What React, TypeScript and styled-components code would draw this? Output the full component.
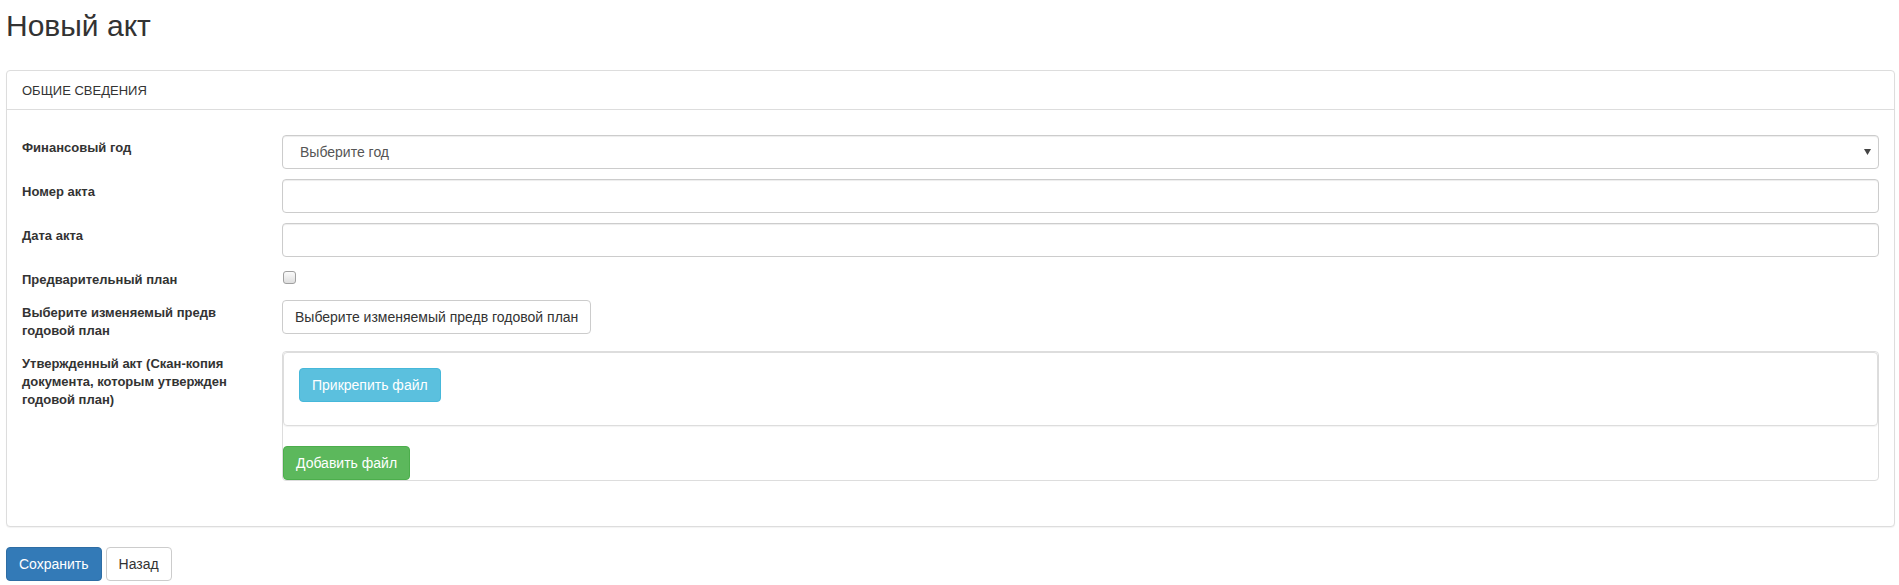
import React from "react";
import styled, { createGlobalStyle, css } from "styled-components";

const GlobalStyle = createGlobalStyle`
  html, body {
    margin: 0;
    padding: 0;
    background: #fff;
  }
  body {
    font-family: "Liberation Sans", Arial, Helvetica, sans-serif;
    color: #333;
    font-size: 14px;
    line-height: 1.42857;
  }
  *, *::before, *::after {
    box-sizing: border-box;
  }
`;

const Page = styled.div`
  padding: 9px 4px 0 6px;
`;

const Title = styled.h2`
  margin: 0 0 28px;
  font-size: 30px;
  font-weight: 500;
  line-height: 33px;
  color: #333;
`;

const Panel = styled.section`
  border: 1px solid #ddd;
  border-radius: 4px;
  margin-bottom: 20px;
  box-shadow: 0 1px 1px rgba(0, 0, 0, 0.05);
  background: #fff;
`;

const PanelHeading = styled.div`
  padding: 11px 15px 10px;
  font-size: 13px;
  line-height: 17px;
  border-bottom: 1px solid #ddd;
  color: #333;
`;

const PanelBody = styled.div`
  padding: 25px 15px 45px;
  display: flex;
  flex-direction: column;
  gap: 10px;
`;

const FormRow = styled.div`
  display: grid;
  grid-template-columns: 260px 1fr;
  align-items: start;
`;

const FieldLabel = styled.label`
  font-size: 13px;
  font-weight: bold;
  line-height: 18px;
  padding: 4px 15px 1px 0;
  color: #333;
`;

const controlBase = css`
  display: block;
  width: 100%;
  height: 34px;
  border: 1px solid #ccc;
  border-radius: 4px;
  background: #fff;
  box-shadow: inset 0 1px 1px rgba(0, 0, 0, 0.075);
  font-family: inherit;
  font-size: 14px;
  color: #555;
`;

const TextInput = styled.input`
  ${controlBase};
  padding: 6px 12px;
  line-height: 20px;
  outline: none;
`;

const SelectWrap = styled.div`
  position: relative;
`;

const SelectBox = styled.select`
  ${controlBase};
  appearance: none;
  -webkit-appearance: none;
  padding: 6px 30px 6px 17px;
  line-height: 20px;
  outline: none;
`;

const SelectArrow = styled.svg`
  position: absolute;
  right: 8px;
  top: 14px;
  width: 7px;
  height: 6px;
  pointer-events: none;
`;

const CheckCell = styled.div`
  min-height: 23px;
`;

const CheckBox = styled.input`
  appearance: none;
  -webkit-appearance: none;
  display: block;
  width: 13px;
  height: 13px;
  margin: 4px 0 0 1px;
  border: 1px solid #a0a0a0;
  border-radius: 3px;
  background: linear-gradient(#fbfbfb, #dedede);
`;

type Variant = "default" | "primary" | "info" | "success";

const variants: Record<Variant, ReturnType<typeof css>> = {
  default: css`
    color: #333;
    background: #fff;
    border-color: #ccc;
  `,
  primary: css`
    color: #fff;
    background: #337ab7;
    border-color: #2e6da4;
  `,
  info: css`
    color: #fff;
    background: #5bc0de;
    border-color: #46b8da;
  `,
  success: css`
    color: #fff;
    background: #5cb85c;
    border-color: #4cae4c;
  `,
};

const Button = styled.button<{ $variant: Variant }>`
  display: inline-block;
  padding: 6px 12px;
  font-family: inherit;
  font-size: 14px;
  line-height: 20px;
  font-weight: normal;
  border: 1px solid;
  border-radius: 4px;
  cursor: pointer;
  white-space: nowrap;
  ${(p) => variants[p.$variant]};
`;

const ControlStart = styled.div`
  display: flex;
  align-items: flex-start;
`;

const FileGroup = styled.div`
  border: 1px solid #ddd;
  border-radius: 4px;
  display: flex;
  flex-direction: column;
  align-items: flex-start;
`;

const FileList = styled.div`
  align-self: stretch;
  border: 1px solid #ddd;
  border-radius: 4px;
  padding: 15px 15px 23px;
  box-shadow: 0 1px 1px rgba(0, 0, 0, 0.05);
`;

const AddFile = styled(Button)`
  margin-top: 20px;
`;

const Actions = styled.div`
  display: flex;
  gap: 4px;
`;

export default function App() {
  return (
    <>
      <GlobalStyle />
      <Page>
        <Title>Новый акт</Title>
        <Panel>
          <PanelHeading>ОБЩИЕ СВЕДЕНИЯ</PanelHeading>
          <PanelBody>
            <FormRow>
              <FieldLabel>Финансовый год</FieldLabel>
              <SelectWrap>
                <SelectBox defaultValue="">
                  <option value="">Выберите год</option>
                </SelectBox>
                <SelectArrow viewBox="0 0 7 6">
                  <polygon points="0,0 7,0 3.5,6" fill="#444" />
                </SelectArrow>
              </SelectWrap>
            </FormRow>
            <FormRow>
              <FieldLabel>Номер акта</FieldLabel>
              <TextInput type="text" />
            </FormRow>
            <FormRow>
              <FieldLabel>Дата акта</FieldLabel>
              <TextInput type="text" />
            </FormRow>
            <FormRow>
              <FieldLabel>Предварительный план</FieldLabel>
              <CheckCell>
                <CheckBox type="checkbox" />
              </CheckCell>
            </FormRow>
            <FormRow>
              <FieldLabel>Выберите изменяемый предв годовой план</FieldLabel>
              <ControlStart>
                <Button $variant="default">Выберите изменяемый предв годовой план</Button>
              </ControlStart>
            </FormRow>
            <FormRow>
              <FieldLabel>
                Утвержденный акт (Скан-копия документа, которым утвержден годовой план)
              </FieldLabel>
              <FileGroup>
                <FileList>
                  <Button $variant="info">Прикрепить файл</Button>
                </FileList>
                <AddFile $variant="success">Добавить файл</AddFile>
              </FileGroup>
            </FormRow>
          </PanelBody>
        </Panel>
        <Actions>
          <Button $variant="primary">Сохранить</Button>
          <Button $variant="default">Назад</Button>
        </Actions>
      </Page>
    </>
  );
}
